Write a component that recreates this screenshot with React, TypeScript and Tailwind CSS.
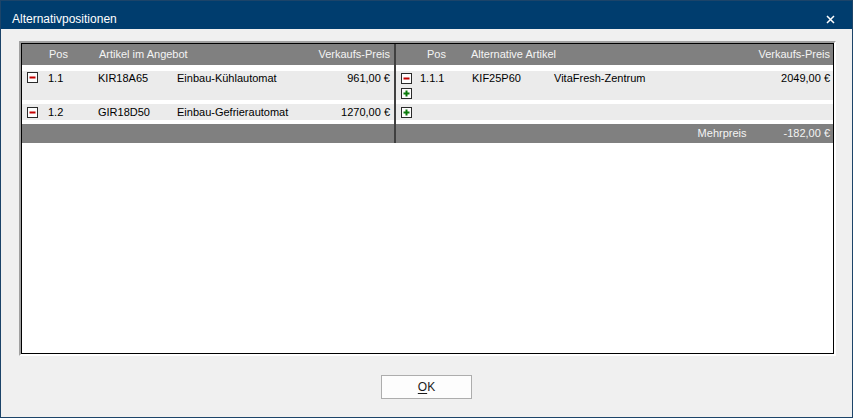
import React from 'react';

/* ── Tree toggle glyphs (WinForms style) ─────────────────────── */

const MinusBox = () => (
  <svg width="11" height="11" viewBox="0 0 11 11" className="block shrink-0">
    <rect x="0.5" y="0.5" width="10" height="10" fill="#fdfdfd" stroke="#2a2a2a" />
    <rect x="2.5" y="4.5" width="6" height="2" fill="#c40000" />
  </svg>
);

const PlusBox = () => (
  <svg width="11" height="11" viewBox="0 0 11 11" className="block shrink-0">
    <rect x="0.5" y="0.5" width="10" height="10" fill="#fdfdfd" stroke="#2a2a2a" />
    <rect x="2.5" y="4.5" width="6" height="2" fill="#0a7a0a" />
    <rect x="4.5" y="2.5" width="2" height="6" fill="#0a7a0a" />
  </svg>
);

const Divider = () => <div className="w-[2px] shrink-0 bg-[#404040]" />;

type RowProps = {
  left?: React.ReactNode;
  right?: React.ReactNode;
  className?: string;
};

const Row = ({ left, right, className = '' }: RowProps) => (
  <div className={`flex ${className}`}>
    <div className="flex w-[372px] shrink-0">{left}</div>
    <Divider />
    <div className="flex min-w-0 flex-1">{right}</div>
  </div>
);

export default function App() {
  return (
    <div
      className="flex h-[418px] w-[853px] flex-col border border-[#1c4469] bg-[#f0f0f0] text-black"
      style={{ fontFamily: '"Liberation Sans", Arial, sans-serif' }}
    >
      {/* Title bar */}
      <div className="flex h-[28px] shrink-0 items-start bg-[#003d6e] pl-[11px] pr-[17px] pt-[11px]">
        <span className="flex-1 text-[12px] leading-[14px] text-white">Alternativpositionen</span>
        <svg width="9" height="9" viewBox="0 0 9 9" className="mt-[3px]">
          <path d="M1 1 L8 8 M8 1 L1 8" stroke="#ffffff" strokeWidth="1.5" />
        </svg>
      </div>

      {/* Body */}
      <div className="flex flex-1 flex-col items-center pt-[12px]">
        <div className="ml-[18px] w-[817px] self-start border-2 border-t-[#a0a0a0] border-l-[#a0a0a0] border-r-white border-b-white">
          <div className="flex h-[311px] flex-col border border-black bg-white text-[11px] leading-[15px]">
            {/* Header */}
            <Row
              className="h-[21px] bg-[#808080] text-[#f4f4f4]"
              left={
                <div className="flex flex-1 items-center pl-[27px] pr-[4px]">
                  <span className="w-[50px]">Pos</span>
                  <span className="flex-1">Artikel im Angebot</span>
                  <span>Verkaufs-Preis</span>
                </div>
              }
              right={
                <div className="flex flex-1 items-center pl-[31px] pr-[3px]">
                  <span className="w-[44px]">Pos</span>
                  <span className="flex-1">Alternative Artikel</span>
                  <span>Verkaufs-Preis</span>
                </div>
              }
            />
            <Row className="h-[6px]" />

            {/* Position 1.1 */}
            <Row
              className="h-[29px] bg-[#ebebeb]"
              left={
                <div className="flex flex-1 items-start pl-[5px] pr-[4px]">
                  <div className="mt-[1px]">
                    <MinusBox />
                  </div>
                  <span className="ml-[10px] w-[50px]">1.1</span>
                  <span className="w-[79px]">KIR18A65</span>
                  <span className="flex-1">Einbau-Kühlautomat</span>
                  <span>961,00 €</span>
                </div>
              }
              right={
                <div className="flex flex-1 items-start pl-[5px] pr-[3px]">
                  <div className="mt-[2px] flex flex-col gap-[4px]">
                    <MinusBox />
                    <PlusBox />
                  </div>
                  <span className="ml-[8px] w-[52px]">1.1.1</span>
                  <span className="w-[82px]">KIF25P60</span>
                  <span className="flex-1">VitaFresh-Zentrum</span>
                  <span>2049,00 €</span>
                </div>
              }
            />
            <Row className="h-[4px]" />

            {/* Position 1.2 */}
            <Row
              className="h-[16px] bg-[#ebebeb]"
              left={
                <div className="flex flex-1 items-center pl-[5px] pr-[4px]">
                  <MinusBox />
                  <span className="ml-[10px] w-[50px]">1.2</span>
                  <span className="w-[79px]">GIR18D50</span>
                  <span className="flex-1">Einbau-Gefrierautomat</span>
                  <span>1270,00 €</span>
                </div>
              }
              right={
                <div className="flex flex-1 items-center pl-[5px]">
                  <PlusBox />
                </div>
              }
            />
            <Row className="h-[4px]" />

            {/* Footer */}
            <Row
              className="h-[19px] bg-[#808080] text-[#f4f4f4]"
              right={
                <div className="flex flex-1 items-center justify-end pr-[3px]">
                  <span>Mehrpreis</span>
                  <span className="ml-[37px]">-182,00 €</span>
                </div>
              }
            />
            <div className="flex-1" />
          </div>
        </div>

        <button
          type="button"
          className="mt-[19px] h-[24px] w-[91px] border border-[#adadad] bg-[#fdfdfd] text-[12px] leading-[22px] text-[#1a1a1a]"
        >
          <span className="underline underline-offset-2">O</span>K
        </button>
      </div>
    </div>
  );
}
